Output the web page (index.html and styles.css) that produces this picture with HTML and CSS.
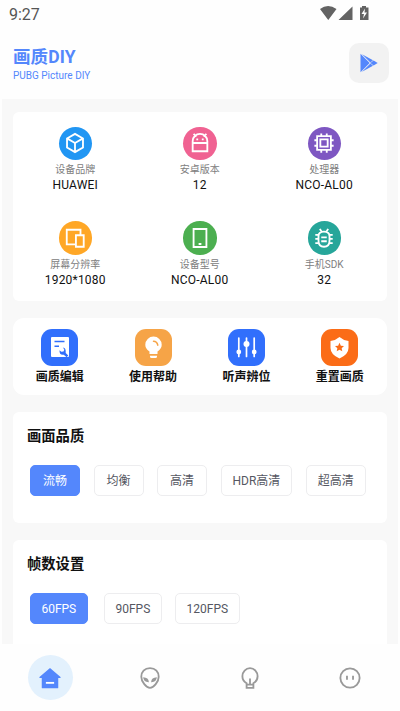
FILE: index.html
```html
<!DOCTYPE html>
<html lang="zh-CN">
<head>
<meta charset="utf-8">
<meta name="viewport" content="width=device-width, initial-scale=1">
<title>画质DIY</title>
<link rel="stylesheet" href="styles.css">
</head>
<body>
<div class="status">
  <span class="time">9:27</span>
  <svg class="signals" width="49" height="16" viewBox="0 0 49 16"><path fill="#636363" d="M0 4Q8 -2 16.500 4L8.250 15zM32.500 1.500V15H18.500zM40 2.500h2V1h4v1.500h2.500V15H40z"/><path fill="#fff" d="M45 3.500 41.500 9H44l-1 4.500L47 7.500h-2.500z"/></svg>
</div>
<header class="header">
  <div>
    <h1>画质DIY</h1>
    <p>PUBG Picture DIY</p>
  </div>
  <div class="play"><svg width="20" height="20" viewBox="0 0 20 20"><path fill="#5487fc" d="M1.500.8 10.700 10 1.500 19.200zM3 1.200 14 7.200 11.400 9.400zM3 18.800l11-6-2.600-2.200zM11.400 10l3.200-2.500L18.700 10l-4.100 2.500z"/></svg></div>
</header>
<main class="content">
  <section class="card info">
    <div class="fact">
      <div class="badge blue"><svg viewBox="0 0 24 24"><path d="m12 2 8.700 5v10L12 22l-8.700-5V7zM3.300 7l8.700 5 8.700-5M12 12v10"/></svg></div>
      <span class="label">设备品牌</span><span class="value">HUAWEI</span>
    </div>
    <div class="fact">
      <div class="badge pink"><svg viewBox="0 0 24 24"><path d="M4 21V10a8 8 0 0 1 16 0v11zM4 12h16M5 2l3 3M19 2l-3 3"/><path class="solid" d="M8 7h2v2H8zM14 7h2v2h-2z"/></svg></div>
      <span class="label">安卓版本</span><span class="value">12</span>
    </div>
    <div class="fact">
      <div class="badge purple"><svg viewBox="0 0 24 24"><path d="M4.500 4.500h15v15h-15zM9 1.500v3M15 1.500v3M9 19.500v3M15 19.500v3M1.500 9h3M1.500 15h3M19.500 9h3M19.500 15h3"/><path d="M8 8h8v8H8z"/></svg></div>
      <span class="label">处理器</span><span class="value">NCO-AL00</span>
    </div>
    <div class="fact">
      <div class="badge amber"><svg viewBox="0 0 24 24"><path d="M13 19H3V3h15v6M13 9h8.500v12.500H13z"/></svg></div>
      <span class="label">屏幕分辨率</span><span class="value">1920*1080</span>
    </div>
    <div class="fact">
      <div class="badge green"><svg viewBox="0 0 24 24"><path d="M5 2.200h14v19.600H5zM10.500 18.500h3"/></svg></div>
      <span class="label">设备型号</span><span class="value">NCO-AL00</span>
    </div>
    <div class="fact">
      <div class="badge teal"><svg viewBox="0 0 24 24"><path d="M6 10q0-5 6-5t6 5v5q0 6.500-6 6.500T6 15zM7.500 2l2 3.500M16.500 2l-2 3.500M2.500 8.500H6M2.500 13H6M2.500 17.500h4M18 8.500h3.500M18 13h3.500M17.500 17.500h4M9 11.300h6M9 15.500h6"/></svg></div>
      <span class="label">手机SDK</span><span class="value">32</span>
    </div>
  </section>

  <section class="card actions">
    <div class="action">
      <svg viewBox="0 0 37 37"><rect width="37" height="37" rx="11" fill="#316ffc"/><path fill="#fff" d="M11 8h16a1 1 0 0 1 1 1v18a1 1 0 0 1-1 1H11a1 1 0 0 1-1-1V9a1 1 0 0 1 1-1z"/><path d="M13.500 12.500h10M13.500 17.200h4.500" stroke="#316ffc" stroke-width="1.500"/><path d="m22 18.500 1.300 2.200-.8 1.800-2.200.2-1.800-1.500q-.3 5.200 4.300 4.500l2.800 2.600 1.700-1.700-2.600-2.700q.5-5-2.700-5.400z" fill="#316ffc"/></svg>
      <span>画质编辑</span>
    </div>
    <div class="action">
      <svg viewBox="0 0 37 37"><rect width="37" height="37" rx="11" fill="#f6a447"/><path fill="#fff" d="M14.500 25v-2.500C11.500 20.500 10.300 18.500 10.300 15.800a8.200 8.200 0 0 1 16.400 0c0 2.700-1.200 4.700-4.200 6.700V25zM15 26.800h7v.7a1.500 1.500 0 0 1-1.500 1.500h-4a1.500 1.500 0 0 1-1.500-1.500z"/><path d="M18.500 12.200q3.500 0 4.300 4" fill="none" stroke="#f6a447" stroke-width="1.500" stroke-linecap="round"/></svg>
      <span>使用帮助</span>
    </div>
    <div class="action">
      <svg viewBox="0 0 37 37"><rect width="37" height="37" rx="11" fill="#316ffc"/><path d="M10.800 9v18.500M18.500 9v18.500M26.200 9v18.500" stroke="#fff" stroke-width="1.700" stroke-linecap="round"/><g fill="#fff"><circle cx="10.800" cy="23" r="2.400"/><circle cx="18.500" cy="15" r="3"/><circle cx="26.200" cy="23" r="2.400"/></g></svg>
      <span>听声辨位</span>
    </div>
    <div class="action">
      <svg viewBox="0 0 37 37"><rect width="37" height="37" rx="11" fill="#fb6c17"/><path fill="#fff" d="M18.500 8q4 3.500 9 4v7q0 6.500-9 10.500-9-4-9-10.500v-7q5-.5 9-4z"/><path fill="#fb6c17" d="m18.500 13.700 1.350 2.950 3.150.35-2.350 2.150.65 3.150-2.800-1.600-2.800 1.600.65-3.150L14 17l3.150-.35z"/></svg>
      <span>重置画质</span>
    </div>
  </section>

  <section class="card options">
    <h2>画面品质</h2>
    <div class="chips">
      <button class="chip on">流畅</button>
      <button class="chip">均衡</button>
      <button class="chip">高清</button>
      <button class="chip">HDR高清</button>
      <button class="chip">超高清</button>
    </div>
  </section>

  <section class="card options">
    <h2>帧数设置</h2>
    <div class="chips fps">
      <button class="chip on">60FPS</button>
      <button class="chip">90FPS</button>
      <button class="chip">120FPS</button>
    </div>
  </section>
</main>
<nav class="nav">
  <div class="tab active"><svg viewBox="0 0 24 24"><path fill="#5487fc" d="M12 1.200 23.500 11v1H21v10.500q0 .8-.8.800H3.800q-.8 0-.8-.8V12H.5v-1z"/><path stroke="#fff" stroke-width="2" d="M7.500 17.300h9"/></svg></div>
  <div class="tab"><svg viewBox="0 0 24 24"><path class="line" d="M12 1.300c6 0 9.500 4 9.500 9.200C21.500 16 16 22.700 12 22.700S2.500 16 2.500 10.500C2.500 5.300 6 1.300 12 1.300z"/><path fill="#999" d="M4.500 11.200q6 .3 6.300 5.300-5.800.2-6.300-5.300zM19.500 11.200q-6 .3-6.300 5.300 5.800.2 6.300-5.300z"/></svg></div>
  <div class="tab"><svg viewBox="0 0 24 24"><path class="line" d="M8.300 22.700v-5C5 15.700 3.700 13 3.700 10a8.300 8.700 0 0 1 16.600 0c0 3-1.300 5.700-4.600 7.700v5zM8.300 19.300h7.400M12 12.500v6.500"/></svg></div>
  <div class="tab"><svg viewBox="0 0 24 24"><circle class="line" cx="12" cy="12" r="10.500"/><path stroke="#999" stroke-width="2" d="M8.700 9.500v4.500M15.300 9.500v4.500"/></svg></div>
</nav>
</body>
</html>
```
FILE: styles.css
```css
* {
  box-sizing: border-box;
}

body {
  margin: 0;
  height: 711px;
  display: flex;
  flex-direction: column;
  overflow: hidden;
  background: #fefefe;
  color: #111;
  font-family: Roboto, "Noto Sans CJK SC", sans-serif;
}

h1, h2, p {
  margin: 0;
}

.status {
  flex: none;
  height: 27px;
  display: flex;
  justify-content: space-between;
  padding: 5px 31px 0 9px;
}

.time {
  font-size: 16px;
  line-height: 19px;
  color: #555;
}

.header {
  flex: none;
  height: 72px;
  display: flex;
  justify-content: space-between;
  padding: 16px 11px 0 13px;
  color: #5487fc;
}

.header h1 {
  font-size: 17.500px;
  line-height: 28px;
  font-weight: 700;
  letter-spacing: 0.1px;
}

.header p {
  font-size: 10px;
  line-height: 12px;
  margin-top: -1px;
}

.play {
  width: 40px;
  height: 40px;
  border-radius: 10px;
  background: #f2f2f2;
  display: grid;
  place-items: center;
}

.content {
  flex: none;
  height: 545px;
  margin: 0 2px;
  padding: 13px 11.500px 0 11px;
  background: #f8f8f8;
  display: flex;
  flex-direction: column;
  gap: 17px;
  overflow: hidden;
}

.card {
  flex: none;
  background: #fff;
  border-radius: 6px;
}

.info {
  height: 189px;
  padding-top: 14.500px;
  display: grid;
  grid-template-columns: repeat(3, 1fr);
  grid-auto-rows: 94.500px;
}

.fact {
  display: flex;
  flex-direction: column;
  align-items: center;
}

.badge {
  width: 33.500px;
  height: 33.500px;
  border-radius: 50%;
  display: grid;
  place-items: center;
}

.badge svg {
  width: 22px;
  height: 22px;
  fill: none;
  stroke: #fff;
  stroke-width: 2;
}

.badge .solid {
  fill: #fff;
  stroke: none;
}

.blue { background: #2196f3; }
.pink { background: #f06292; }
.purple { background: #7e57c2; }
.amber { background: #ffa726; }
.green { background: #4caf50; }
.teal { background: #26a69a; }

.label {
  margin-top: 2px;
  font-size: 10px;
  line-height: 15px;
  color: #808080;
}

.value {
  font-size: 12px;
  line-height: 16px;
  letter-spacing: 0.2px;
}

.actions {
  height: 77px;
  border-radius: 11px;
  padding-top: 10.500px;
  display: grid;
  grid-template-columns: repeat(4, 1fr);
}

.action {
  display: flex;
  flex-direction: column;
  align-items: center;
  font-size: 12px;
  line-height: 18px;
  font-weight: 700;
}

.action svg {
  width: 37px;
  height: 37px;
  margin-bottom: 2px;
}

.options {
  height: 111px;
  padding: 14px 14px 0;
}

.options h2 {
  font-size: 14.300px;
  line-height: 20px;
  font-weight: 700;
}

.chips {
  display: flex;
  gap: 13.500px;
  margin: 19px 0 0 3px;
}

.chip {
  height: 31px;
  min-width: 50px;
  padding: 1px 11px 0;
  border: 1px solid #ededef;
  border-radius: 5px;
  background: #fff;
  color: #555762;
  font-family: inherit;
  font-size: 12px;
  line-height: 18px;
  white-space: nowrap;
}

.chip.on {
  border-color: #5487fc;
  background: #5487fc;
  color: #fff;
}

.fps .chip {
  padding: 1px 10.400px 0;
}

.fps .on {
  margin-right: 3px;
}

.nav {
  flex: 1;
  display: grid;
  grid-template-columns: repeat(4, 1fr);
  place-items: center;
}

.tab {
  width: 45px;
  height: 45px;
  border-radius: 50%;
  display: grid;
  place-items: center;
}

.tab svg {
  width: 22px;
  height: 22px;
}

.active {
  background: #e3f1fd;
}

.line {
  fill: none;
  stroke: #999;
  stroke-width: 2;
}
```
